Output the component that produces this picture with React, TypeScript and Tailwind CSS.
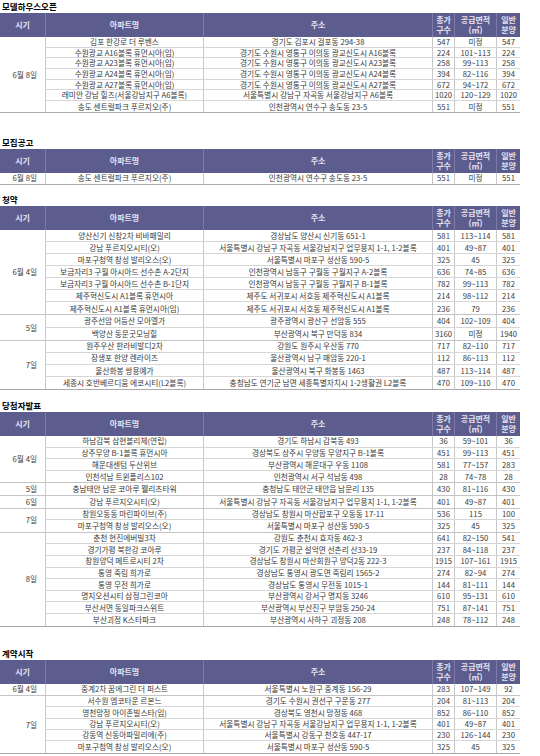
type Row = [string, string, string, string, string];

interface Group {
  date: string;
  rows: Row[];
}

interface Section {
  title: string;
  mt: string;
  rowH: string;
  groups: Group[];
}

const MAPO: Row = ['마포구청역 창성 발리오스(오)', '서울특별시 마포구 성산동 590-5', '325', '45', '325'];
const GANGNAM: Row = [
  '강남 푸르지오시티(오)',
  '서울특별시 강남구 자곡동 서울강남지구 업무용지 1-1, 1-2블록',
  '401',
  '49~87',
  '401',
];
const SONGDO: Row = ['송도 센트럴파크 푸르지오(주)', '인천광역시 연수구 송도동 23-5', '551', '미정', '551'];

const sections: Section[] = [
  {
    title: '모델하우스오픈',
    mt: 'mt-0',
    rowH: 'h-[10.7px]',
    groups: [
      {
        date: '6월 8일',
        rows: [
          ['김포 한강로 더 루벤스', '경기도 김포시 걸포동 294-38', '547', '미정', '547'],
          ['수원광교 A16블록 휴먼시아(임)', '경기도 수원시 영통구 이의동 광교신도시 A16블록', '224', '101~113', '224'],
          ['수원광교 A23블록 휴먼시아(임)', '경기도 수원시 영통구 이의동 광교신도시 A23블록', '258', '99~113', '258'],
          ['수원광교 A24블록 휴먼시아(임)', '경기도 수원시 영통구 이의동 광교신도시 A24블록', '394', '82~116', '394'],
          ['수원광교 A27블록 휴먼시아(임)', '경기도 수원시 영통구 이의동 광교신도시 A27블록', '672', '94~172', '672'],
          ['래미안 강남 힐즈(서울강남지구 A6블록)', '서울특별시 강남구 자곡동 서울강남지구 A6블록', '1020', '120~129', '1020'],
          SONGDO,
        ],
      },
    ],
  },
  {
    title: '모집공고',
    mt: 'mt-[23px]',
    rowH: 'h-[11px]',
    groups: [{ date: '6월 8일', rows: [SONGDO] }],
  },
  {
    title: '청약',
    mt: 'mt-[8px]',
    rowH: 'h-[12.1px]',
    groups: [
      {
        date: '6월 4일',
        rows: [
          ['양산신기 신창2차 비바패밀리', '경상남도 양산시 신기동 651-1', '581', '113~114', '581'],
          GANGNAM,
          MAPO,
          ['보금자리3 구월 아시아드 선수촌 A-2단지', '인천광역시 남동구 구월동 구월지구 A-2블록', '636', '74~85', '636'],
          ['보금자리3 구월 아시아드 선수촌 B-1단지', '인천광역시 남동구 구월동 구월지구 B-1블록', '782', '99~113', '782'],
          ['제주혁신도시 A1블록 휴먼시아', '제주도 서귀포시 서호동 제주혁신도시 A1블록', '214', '98~112', '214'],
          ['제주혁신도시 A1블록 휴먼시아(임)', '제주도 서귀포시 서호동 제주혁신도시 A1블록', '236', '79', '236'],
        ],
      },
      {
        date: '5일',
        rows: [
          ['광주선암 어등산 모아엘가', '광주광역시 광산구 선암동 555', '404', '102~109', '404'],
          ['백양산 동문굿모닝힐', '부산광역시 북구 만덕동 834', '3160', '미정', '1940'],
        ],
      },
      {
        date: '7일',
        rows: [
          ['원주우산 한라비발디2차', '강원도 원주시 우산동 770', '717', '82~110', '717'],
          ['장생포 한양 렌라이즈', '울산광역시 남구 매암동 220-1', '112', '86~113', '112'],
          ['울산화봉 쌍용예가', '울산광역시 북구 화봉동 1463', '487', '113~114', '487'],
          ['세종시 호반베르디움 에코시티(L2블록)', '충청남도 연기군 남면 세종특별자치시 1-2생활권 L2블록', '470', '109~110', '470'],
        ],
      },
    ],
  },
  {
    title: '당첨자발표',
    mt: 'mt-[9px]',
    rowH: 'h-[11.6px]',
    groups: [
      {
        date: '6월 4일',
        rows: [
          ['하남감북 삼현블리체(연립)', '경기도 하남시 감북동 493', '36', '59~101', '36'],
          ['상주무양 B-1블록 휴먼시아', '경상북도 상주시 무양동 무양지구 B-1블록', '451', '99~113', '451'],
          ['해운대센텀 두산위브', '부산광역시 해운대구 우동 1108', '581', '77~157', '283'],
          ['인천석남 트윈폴리스102', '인천광역시 서구 석남동 498', '28', '74~78', '28'],
        ],
      },
      {
        date: '5일',
        rows: [['충남태안 남문 코아루 웰리츠타워', '충청남도 태안군 태안읍 남문리 135', '430', '81~116', '430']],
      },
      { date: '6일', rows: [GANGNAM] },
      {
        date: '7일',
        rows: [['창원오동동 마린파이브(주)', '경상남도 창원시 마산합포구 오동동 17-11', '536', '115', '100'], MAPO],
      },
      {
        date: '8일',
        rows: [
          ['춘천 현진에버빌3차', '강원도 춘천시 효자동 462-3', '641', '82~150', '541'],
          ['경기가평 북한강 코아루', '경기도 가평군 설악면 선촌리 산33-19', '237', '84~118', '237'],
          ['창원양덕 메트로시티 2차', '경상남도 창원시 마산회원구 양덕2동 222-3', '1915', '107~161', '1915'],
          ['통영 죽림 희가로', '경상남도 통영시 광도면 죽림리 1565-2', '274', '82~94', '274'],
          ['통영 무전 희가로', '경상남도 통영시 무전동 1015-1', '144', '81~111', '144'],
          ['명지오션시티 삼정그린코아', '부산광역시 강서구 명지동 3246', '610', '95~131', '610'],
          ['부산서면 동일파크스위트', '부산광역시 부산진구 부암동 250-24', '751', '87~141', '751'],
          ['부산괴정 K스타파크', '부산광역시 사하구 괴정동 208', '248', '78~112', '248'],
        ],
      },
    ],
  },
  {
    title: '계약시작',
    mt: 'mt-[20px]',
    rowH: 'h-[11.4px]',
    groups: [
      {
        date: '6월 4일',
        rows: [['중계2차 꿈에그린 더 퍼스트', '서울특별시 노원구 중계동 156-29', '283', '107~149', '92']],
      },
      {
        date: '7일',
        rows: [
          ['서수원 엠코타운 르본느', '경기도 수원시 권선구 구운동 277', '204', '81~113', '204'],
          ['영천망정 아이존빌스타(임)', '경상북도 영천시 망정동 468', '852', '86~110', '852'],
          GANGNAM,
          ['강동역 신동아파밀리에(주)', '서울특별시 강동구 천호동 447-17', '230', '126~144', '230'],
          MAPO,
        ],
      },
    ],
  },
];

const cols = 'grid grid-cols-[158px_229px_22px_42px_24px]';

function HeaderRow() {
  return (
    <div className="flex h-[24px] bg-[#5d5c8f] text-[8px] font-bold leading-[10px] text-[#e4e4f0]">
      <div className="flex w-[45px] items-center justify-center">시기</div>
      <div className={cols}>
        <div className="flex items-center justify-center border-l border-[#7c7ba8]">아파트명</div>
        <div className="flex items-center justify-center border-l border-[#7c7ba8]">주소</div>
        <div className="flex flex-col items-center justify-center border-l border-[#7c7ba8]">
          <span>총가</span>
          <span>구수</span>
        </div>
        <div className="flex flex-col items-center justify-center border-l border-[#7c7ba8]">
          <span>공급면적</span>
          <span>(㎡)</span>
        </div>
        <div className="flex flex-col items-center justify-center border-l border-[#7c7ba8]">
          <span>일반</span>
          <span>분양</span>
        </div>
      </div>
    </div>
  );
}

function DataRow({ row, rowH, last }: { row: Row; rowH: string; last: boolean }) {
  return (
    <div className={`${cols} ${rowH} ${last ? '' : 'border-b border-[#d6d6d6]'}`}>
      {row.map((cell, i) => (
        <div
          key={i}
          className="flex items-center justify-center overflow-visible whitespace-nowrap border-l border-[#c8c8c8]"
        >
          {cell}
        </div>
      ))}
    </div>
  );
}

function Table({ section }: { section: Section }) {
  return (
    <div className={section.mt}>
      <div className="flex h-[13px] items-center pl-[2px] text-[8.5px] font-bold text-black">{section.title}</div>
      <div className="w-[520px]">
        <HeaderRow />
        <div className="border-b border-[#a9a9a9] text-[7.7px] leading-none text-[#3a3a3a]">
          {section.groups.map((g, gi) => (
            <div
              key={gi}
              className={`flex ${gi < section.groups.length - 1 ? 'border-b border-[#c4c4c4]' : ''}`}
            >
              <div className="flex w-[45px] items-center justify-end whitespace-nowrap pr-[8px]">{g.date}</div>
              <div className="flex flex-col">
                {g.rows.map((r, ri) => (
                  <DataRow key={ri} row={r} rowH={section.rowH} last={ri === g.rows.length - 1} />
                ))}
              </div>
            </div>
          ))}
        </div>
      </div>
    </div>
  );
}

export default function App() {
  return (
    <div className="h-[756px] w-[540px] overflow-hidden bg-white font-['Noto_Sans_CJK_KR',sans-serif]">
      {sections.map((s, i) => (
        <Table key={i} section={s} />
      ))}
    </div>
  );
}
